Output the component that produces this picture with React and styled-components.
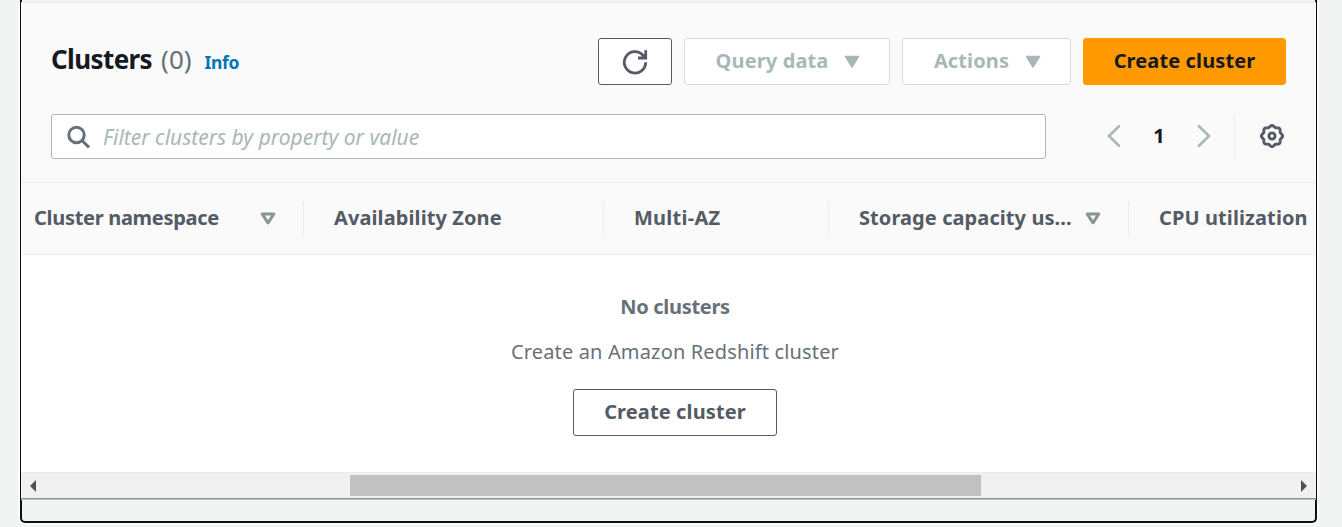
import React from "react";
import styled, { createGlobalStyle, css } from "styled-components";

const Global = createGlobalStyle`
  * { box-sizing: border-box; }
  html, body { margin: 0; background: #f2f3f3; overflow: hidden; }
  body { font-family: "Noto Sans", "Open Sans", sans-serif; font-size: 20px; color: #545b64; }
  h2, p { margin: 0; }
  button { font: inherit; margin: 0; }
  svg { display: block; flex: none; }
`;

const Page = styled.main`
  width: 1342px;
  height: 527px;
  padding: 0 25px 4px 20px;
  overflow: hidden;
`;

const FocusFrame = styled.section`
  height: 523px;
  border: 2px solid #0f1111;
  border-top: 0;
  border-radius: 0 0 5px 5px;
  box-shadow: 0 0 0 2px #fcfcfc;
`;

const Panel = styled.div`
  height: 499px;
  margin: 0 -1px;
  padding-top: 2px;
  border-bottom: 1px solid #879596;
  box-shadow: 0 1px 0 #b9c4c4;
`;

const Header = styled.header`
  height: 181px;
  padding: 35px 30px 0;
  background: #fafafa;
  border-top: 1px solid #eaeded;
  border-bottom: 1px solid #eaeded;
`;

const TitleRow = styled.div`
  display: flex;
  justify-content: space-between;
  height: 47px;
`;

const Title = styled.h2`
  display: flex;
  align-items: baseline;
  height: 42px;
  line-height: 42px;
  font-size: 26px;
  font-weight: 700;
  color: #16191f;
`;

const TitleText = styled.span`
  letter-spacing: -0.6px;
`;

const Count = styled.span`
  margin-left: 9px;
  font-weight: 400;
  color: #687078;
`;

const InfoLink = styled.a`
  margin-left: 13px;
  font-size: 17.5px;
  letter-spacing: -0.35px;
  color: #0073bb;
`;

const Actions = styled.div`
  display: flex;
  gap: 12px;
`;

const tones = {
  normal: css`background: #fff; border-color: #545b64; color: #545b64;`,
  disabled: css`background: #fff; border-color: #d5dbdb; color: #aab7b8;`,
  primary: css`background: #ff9900; border-color: #ff9900; color: #16191f;`,
};

const Button = styled.button`
  display: flex;
  align-items: center;
  justify-content: center;
  gap: 16px;
  width: ${(p) => p.$width}px;
  height: 47px;
  padding: 0 0 3px;
  border: 1px solid;
  border-radius: 3px;
  font-weight: 700;
  letter-spacing: 0.12px;
  white-space: nowrap;
  ${(p) => tones[p.$tone]}

  svg { margin-top: 4px; }
  span + svg { margin-right: -2px; }
`;

const Tools = styled.div`
  display: flex;
  align-items: center;
  margin-top: 29px;
  height: 45px;
`;

const Search = styled.div`
  display: flex;
  align-items: center;
  width: 995px;
  height: 45px;
  padding-left: 15px;
  gap: 12px;
  background: #fff;
  border: 1px solid #aab7b8;
  border-radius: 3px;
  font-size: 21px;
  font-style: italic;
  color: #aab7b8;
`;

const Pager = styled.nav`
  display: flex;
  align-items: center;
  justify-content: space-between;
  width: 104px;
  margin-left: 61px;
  padding-bottom: 2px;
  font-weight: 700;
  color: #16191f;
`;

const Settings = styled.div`
  display: flex;
  align-items: center;
  height: 44px;
  margin-left: 23px;
  padding: 0 0 1px 25px;
  border-left: 1px solid #eaeded;
`;

const Columns = styled.div`
  display: flex;
  align-items: center;
  height: 72px;
  overflow: hidden;
  background: #fafafa;
  border-bottom: 1px solid #eaeded;
`;

const Column = styled.div`
  display: flex;
  flex: none;
  align-items: center;
  justify-content: space-between;
  width: ${(p) => p.$width}px;
  height: 36px;
  padding: 0 27px 2px ${(p) => p.$inset || 30}px;
  border-right: 1px solid #eaeded;
  font-weight: 700;
  letter-spacing: ${(p) => p.$tracking || 0}px;
  white-space: nowrap;

  svg { margin-top: 1px; }
`;

const Empty = styled.div`
  display: flex;
  flex-direction: column;
  align-items: center;
  height: 217px;
  padding: 37px 0 0 13px;
  background: #fff;
  color: #687078;
`;

const EmptyTitle = styled.p`
  line-height: 30px;
  font-weight: 700;
  letter-spacing: -0.3px;
`;

const EmptyText = styled.p`
  margin: 15px 0 22px;
  line-height: 30px;
  letter-spacing: 0.15px;
`;

const Scrollbar = styled.div`
  display: flex;
  align-items: center;
  height: 26px;
  padding: 0 9px;
  background: #f0f0f0;
  border-top: 1px solid #eaeded;
`;

const Thumb = styled.div`
  width: 631px;
  height: 21px;
  margin: 0 auto 0 314px;
  background: #c1c1c1;
`;

const Caret = () => (
  <svg width="16" height="14" viewBox="0 0 16 14">
    <path d="M1.5 1.5h13L8 12z" fill="currentColor" stroke="currentColor" strokeWidth="1.5" strokeLinejoin="round" />
  </svg>
);

const SortIcon = () => (
  <svg width="16" height="13" viewBox="0 0 16 13">
    <path d="M2.2 2h11.6L8 10.8z" fill="none" stroke="#879596" strokeWidth="3" strokeLinejoin="round" />
  </svg>
);

const RefreshIcon = () => (
  <svg width="26" height="26" viewBox="0 0 26 26" fill="none" stroke="currentColor" strokeWidth="2.8">
    <path d="M23.7 13.3A10.7 10.7 0 1 1 20.8 6L23.4 9M23.7 1.3V9H16" />
  </svg>
);

const SearchIcon = () => (
  <svg width="24" height="24" viewBox="0 0 24 24" fill="none" stroke="#687078" strokeWidth="3">
    <circle cx="9.5" cy="10" r="7.7" />
    <path d="M15 15.5l7 6.8" />
  </svg>
);

const Chevron = ({ flip }) => (
  <svg width="14" height="24" viewBox="0 0 14 24" fill="none" stroke="#aab7b8" strokeWidth="2.6">
    <path d={flip ? "M1.2 1.5L12 12 1.2 22.5" : "M12.8 1.5L2 12l10.8 10.5"} />
  </svg>
);

const gearPath = Array.from({ length: 121 }, (_, i) => {
  const a = (i / 120) * Math.PI * 2;
  const r = 9.8 + 0.8 * Math.cos(8 * a);
  return `${i ? "L" : "M"}${(12 + r * Math.cos(a)).toFixed(2)} ${(12 + r * Math.sin(a)).toFixed(2)}`;
}).join("") + "Z";

const GearIcon = () => (
  <svg width="24" height="24" viewBox="0 0 24 24" fill="none" stroke="#545b64" strokeWidth="2.9">
    <path d={gearPath} strokeLinejoin="round" />
    <circle cx="12" cy="12" r="3.1" />
  </svg>
);

const ScrollArrow = ({ right }) => (
  <svg width="6" height="12" viewBox="0 0 6 12">
    <path d={right ? "M0 0l6 6-6 6z" : "M6 0L0 6l6 6z"} fill="#505050" />
  </svg>
);

export default function App() {
  return (
    <Page>
      <Global />
      <FocusFrame>
        <Panel>
          <Header>
            <TitleRow>
              <Title>
                <TitleText>Clusters</TitleText>
                <Count>(0)</Count>
                <InfoLink>Info</InfoLink>
              </Title>
              <Actions>
                <Button $tone="normal" $width={74} aria-label="Refresh"><RefreshIcon /></Button>
                <Button $tone="disabled" $width={206}><span>Query data</span><Caret /></Button>
                <Button $tone="disabled" $width={169}><span>Actions</span><Caret /></Button>
                <Button $tone="primary" $width={203}><span>Create cluster</span></Button>
              </Actions>
            </TitleRow>
            <Tools>
              <Search><SearchIcon /><span>Filter clusters by property or value</span></Search>
              <Pager><Chevron /><span>1</span><Chevron flip /></Pager>
              <Settings><GearIcon /></Settings>
            </Tools>
          </Header>
          <Columns>
            <Column $width={283} $inset={13} $tracking={-0.3}><span>Cluster namespace</span><SortIcon /></Column>
            <Column $width={300} $tracking={0.1}><span>Availability Zone</span></Column>
            <Column $width={225} $tracking={0.25}><span>Multi-AZ</span></Column>
            <Column $width={300} $tracking={0.08}><span>Storage capacity us...</span><SortIcon /></Column>
            <Column $width={300} $tracking={0.1}><span>CPU utilization</span></Column>
          </Columns>
          <Empty>
            <EmptyTitle>No clusters</EmptyTitle>
            <EmptyText>Create an Amazon Redshift cluster</EmptyText>
            <Button $tone="normal" $width={204}><span>Create cluster</span></Button>
          </Empty>
          <Scrollbar><ScrollArrow /><Thumb /><ScrollArrow right /></Scrollbar>
        </Panel>
      </FocusFrame>
    </Page>
  );
}
